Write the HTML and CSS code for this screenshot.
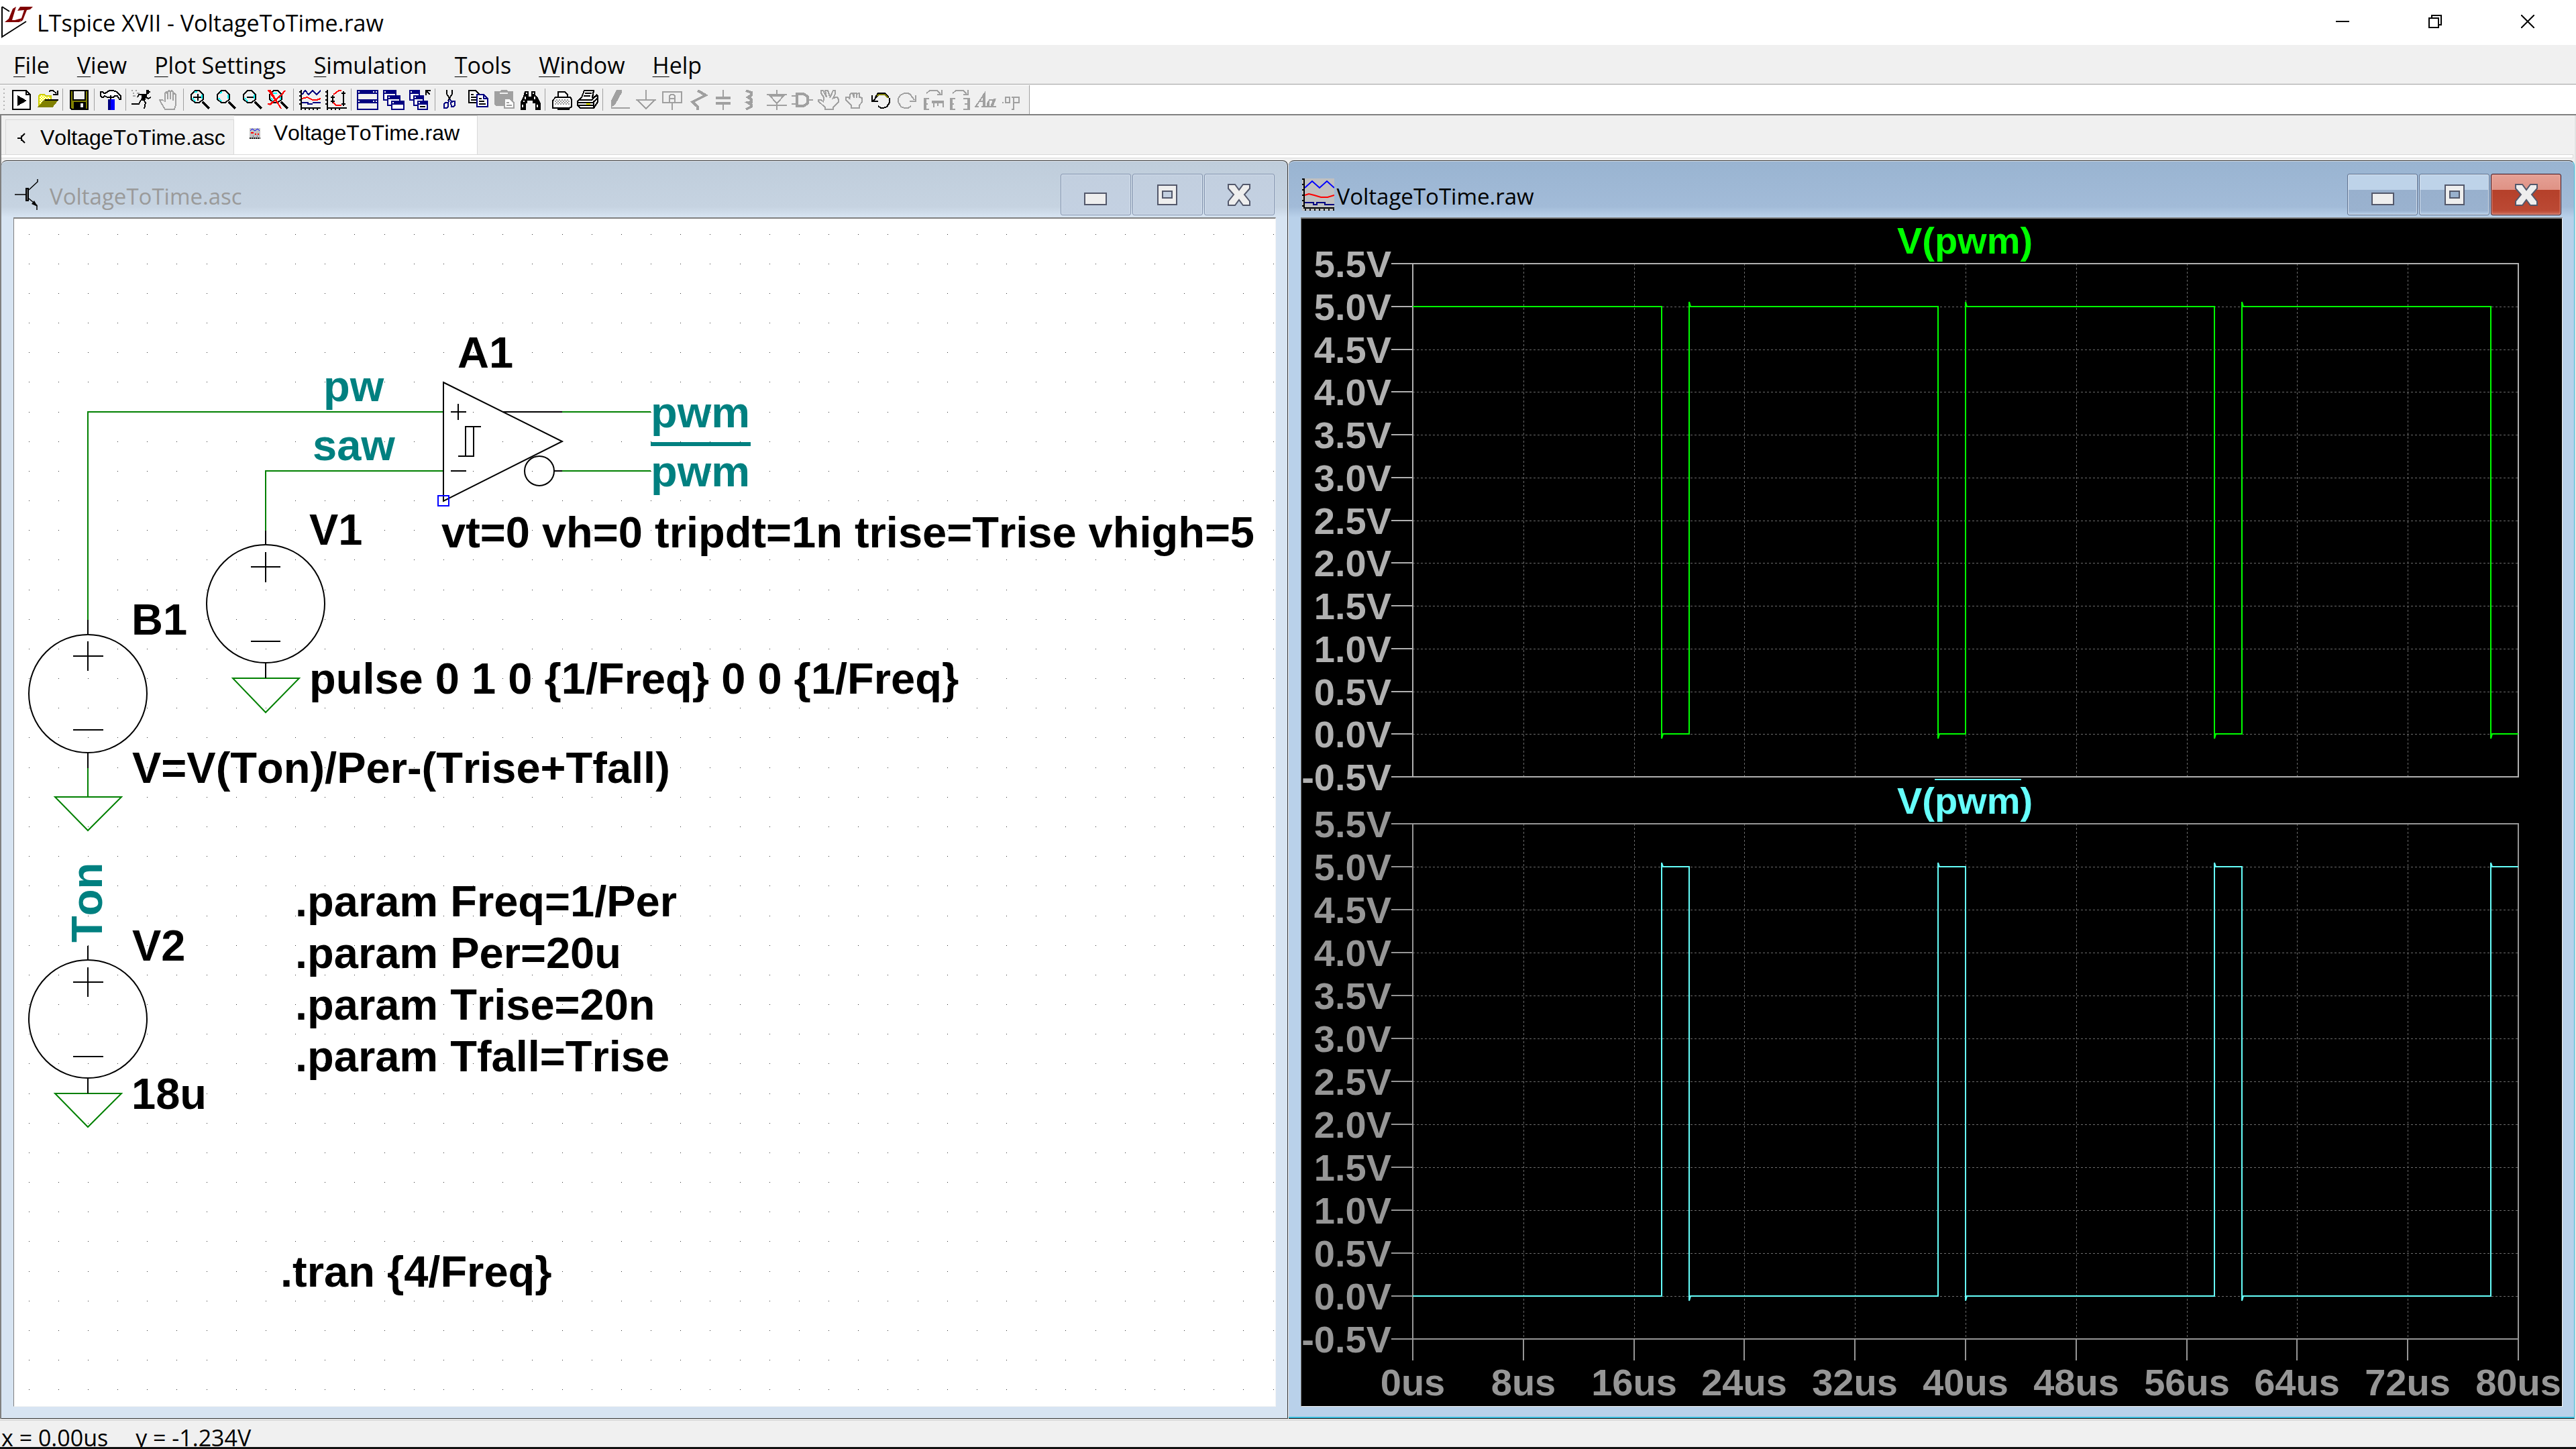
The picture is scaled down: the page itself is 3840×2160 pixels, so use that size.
FILE: index.html
```html
<!DOCTYPE html>
<html lang="en">
<head>
<meta charset="utf-8">
<title>LTspice XVII - VoltageToTime.raw</title>
<link rel="stylesheet" href="styles.css">
</head>
<body>
<header class="titlebar">
  <svg class="app-logo" width="50" height="58" viewBox="0 0 50 58" aria-hidden="true">
    <path d="M3 10 V55 L39 32 M3 10 L14 17" fill="none" stroke="#000" stroke-width="2"/>
    <path d="M24 10 L19 13 L13 28 L7 33 H29 L33 27 L22 30 H18 Z" fill="#800000"/>
    <path d="M26 16 L30 10 H49 L45 14 L40 15 L34 30 L30 33 L36 15 Z" fill="#800000"/>
  </svg>
  <h1 class="app-title">LTspice XVII - VoltageToTime.raw</h1>
  <div class="caption-buttons">
    <button class="caption-button" aria-label="Minimize"><svg width="20" height="20" viewBox="0 0 20 20"><path d="M0 10H20" stroke="#000" stroke-width="2"/></svg></button>
    <button class="caption-button" aria-label="Restore"><svg width="20" height="20" viewBox="0 0 20 20"><path d="M1 5H15V19H1ZM5 5V1H19V15H15" fill="none" stroke="#000" stroke-width="2"/></svg></button>
    <button class="caption-button" aria-label="Close"><svg width="20" height="20" viewBox="0 0 20 20"><path d="M0 0L20 20M20 0L0 20" stroke="#000" stroke-width="2"/></svg></button>
  </div>
</header>
<nav class="menubar">
  <button class="menu"><u>F</u>ile</button>
  <button class="menu"><u>V</u>iew</button>
  <button class="menu"><u>P</u>lot Settings</button>
  <button class="menu"><u>S</u>imulation</button>
  <button class="menu"><u>T</u>ools</button>
  <button class="menu"><u>W</u>indow</button>
  <button class="menu"><u>H</u>elp</button>
</nav>
<div class="toolbar-row">
<div class="toolbar">
  <svg class="grip" width="6" height="36" viewBox="0 0 6 36" aria-hidden="true"><path d="M2 1V36" stroke="#b4b4b4" stroke-width="2" stroke-dasharray="2 4"/></svg>
  <button class="tool" aria-label="New"><svg viewBox="0 0 16 15"><path class="k w" d="M1.5 .5H11.5L14.5 3.5V14.5H1.5Z"/><path class="k" d="M11.5 1V3.5H14"/><path d="M5 4V12L12 8Z"/></svg></button>
  <button class="tool" aria-label="Open"><svg viewBox="0 0 16 15"><defs><pattern id="weave" width="2" height="2" patternUnits="userSpaceOnUse"><path d="M0 0H2V2H0Z" fill="#fff"/><path d="M0 0H1V1H0ZM1 1H2V2H1Z" fill="#ff0"/></pattern></defs><path d="M1.5 12V4.5L2.5 3.5H5.5L6.5 4.5H10.5V8L3 12Z" fill="url(#weave)" stroke="#cc0"/><path d="M6 7.5H15.5L11.5 12.5H1.5Z" fill="#808000" stroke="#808000"/><path d="M6 7.5H16" stroke="#000"/><path class="k" d="M9 1.5L10 .5H12L14.5 2.5M15.5 .5V3.5H12"/></svg></button>
  <span class="sep"></span>
  <button class="tool" aria-label="Save"><svg viewBox="0 0 16 15"><path d="M1.5 .5H14.5V14.5H2.5L1.5 13.5Z" fill="#808000" stroke="#000"/><path class="k" d="M3.5 1V7.5H12.5V1" style="fill:#efefef"/><path d="M4 9H13V14H4Z"/><path d="M9 10H11V13H9Z" fill="#efefef"/></svg></button>
  <span class="sep"></span>
  <button class="tool" aria-label="Control Panel"><svg viewBox="0 0 16 15"><path class="k w" d="M.5 1.5H2L3 2.5H4L5.5 1.5L7 .5H10L12.5 1.5L15.5 4.5V7H14.5L13 4.5H11L10 5.5H5.5L3.5 4.5L2.5 5.5H1.5L.5 4.5Z"/><path class="k" d="M6 5.5H10M8 4V7"/><path d="M6 7H8V15H6Z" fill="#000080"/><path d="M8 7H11V15H8Z" fill="#00f"/></svg></button>
  <span class="sep"></span>
  <button class="tool" aria-label="Run"><svg viewBox="0 0 16 15"><path class="g" d="M0 .5H1M3 .5H4M1 2.5H2M4 2.5H6M1 4.5H3"/><path d="M11 0H13V3H11ZM8 3H12L10 8H7Z"/><path class="k" d="M8 3.5H5.5L4.5 5.5M11 5.5L12.5 6.5L14.5 5.5M9 7.5L10.5 9.5L9.5 14M7 7.5L5.5 10.5H0M13 1.5H14"/></svg></button>
  <button class="tool" aria-label="Halt"><svg viewBox="0 0 16 15"><path class="g" d="M4.5 8L3.5 7.5H1.5L2.5 9.5L5.5 14.5H12.5L13.5 11V3.5L12.5 2.5L11.5 3.5V7M11.5 8V1.5L10.5 .5L9.5 1.5V7M9.5 1.5L8.5 .5L7.5 1.5V7M7.5 3L6.5 1.5L5.5 2.5V9"/></svg></button>
  <span class="sep"></span>
  <button class="tool" aria-label="Zoom to rectangle"><svg viewBox="0 0 16 15"><path d="M10 9L15 14" stroke="#000" stroke-width="2"/><path class="k" d="M4.5 .5H7.5L10.5 3.5V7L7.5 9.5H4.5L1.5 7V3.5Z"/><path class="c" d="M2.5 6L4.5 8.5M9.5 3.5V6.5M4 1.5H6"/><path class="k" d="M3 5.5H9M6.5 3V8"/></svg></button>
  <button class="tool" aria-label="Pan"><svg viewBox="0 0 16 15"><path d="M10 9L15 14" stroke="#000" stroke-width="2"/><path class="k" d="M4.5 .5H7.5L10.5 3.5V7L7.5 9.5H4.5L1.5 7V3.5Z"/><path class="c" d="M2.5 6L4.5 8.5M9.5 3.5V6.5M3.5 2.5L5 1.5"/></svg></button>
  <button class="tool" aria-label="Zoom back"><svg viewBox="0 0 16 15"><path d="M10 9L15 14" stroke="#000" stroke-width="2"/><path class="k" d="M4.5 .5H7.5L10.5 3.5V7L7.5 9.5H4.5L1.5 7V3.5Z"/><path class="c" d="M2.5 6L4.5 8.5M9.5 3.5V6.5"/><path class="k" d="M4 5.5H9"/></svg></button>
  <button class="tool" aria-label="Zoom to fit"><svg viewBox="0 0 16 15"><path d="M10 9L15 14" stroke="#000" stroke-width="2"/><path class="k" d="M4.5 .5H7.5L10.5 3.5V7L7.5 9.5H4.5L1.5 7V3.5Z"/><path class="c" d="M2.5 6L4.5 8.5M9.5 3.5V7.5M4 2.5H7"/><path class="r" d="M0 .5H2L10 14M13 .5L9 5L1 11M0 10.5H2"/><path class="r" d="M1 1L9 12M12 2L2 11"/></svg></button>
  <span class="sep"></span>
  <button class="tool" aria-label="Autorange"><svg viewBox="0 0 16 15"><path class="k" d="M1.5 0V15M0 1.5H2M0 4.5H2M0 7.5H2M0 10.5H2M1 13.5H16M4.5 13V15M7.5 13V15M10.5 13V15M13.5 13V15"/><path class="n" d="M2 3.5L4.5 .5L7 3.5L10 .5L13 3.5L16 .5M2 9.5H7M6 10.5H10M10 9.5H16"/><path class="r" d="M2 6.5L6 5.5L10 7.5L13 7.5L16 6.5"/></svg></button>
  <button class="tool" aria-label="Fit vertically"><svg viewBox="0 0 16 15"><path class="k" d="M1.5 0V15M0 1.5H2M0 4.5H2M0 7.5H2M0 10.5H2M1 13.5H16M4.5 13V15M7.5 13V15M10.5 13V15M13.5 1V12M12 2.5H15M12 10.5H15M5.5 4V10M4 5.5H7M4 8.5H7"/><path class="r" d="M12 .5H10L6 3.5M6 9.5L8 11.5H12"/></svg></button>
  <span class="sep"></span>
  <button class="tool" aria-label="Tile"><svg viewBox="0 0 16 15"><path class="n" d="M.5 .5H15.5V14.5H.5Z"/><path class="nf" d="M0 0H16V3H0ZM0 7H16V10H0Z"/><path class="l" d="M1 1.5H2M12 1.5H13M14 1.5H15M1 8.5H2M12 8.5H13M14 8.5H15"/></svg></button>
  <button class="tool" aria-label="Cascade"><svg viewBox="0 0 16 15"><path class="n w" d="M.5 .5H9.5V7.5H.5Z"/><path class="n w" d="M3.5 4.5H12.5V11.5H3.5Z"/><path class="n w" d="M6.5 8.5H15.5V14.5H6.5Z"/><path class="nf" d="M0 0H10V3H0ZM3 4H13V7H3ZM6 8H16V11H6Z"/><path class="l" d="M1 1.5H2M4 5.5H5M7 9.5H8"/></svg></button>
  <button class="tool" aria-label="Close all"><svg viewBox="0 0 16 15"><path class="n w" d="M.5 .5H7.5V7.5H.5Z"/><path class="n w" d="M3.5 4.5H10.5V11.5H3.5Z"/><path class="n w" d="M6.5 8.5H13.5V14.5H6.5Z"/><path class="nf" d="M0 0H8V3H0ZM3 4H11V7H3ZM6 8H14V11H6Z"/><path class="l" d="M1 1.5H2M4 5.5H5M7 9.5H8"/><path class="k" d="M8 12.5H12M12.5 4V.5H16M12.5 .5L15.5 3.5"/></svg></button>
  <span class="sep"></span>
  <button class="tool" aria-label="Cut"><svg viewBox="0 0 16 15"><path class="k" d="M4.5 0V3L7.5 8M8.5 0V3L5.5 8"/><path class="n" d="M6.5 7L5.5 9.5M7 7L8.5 9.5M3.5 9.5H5.5V12.5L4.5 13.5H2.5V10.5ZM8.5 8.5H10.5V11.5L9.5 12.5H8L7.5 9.5Z"/></svg></button>
  <button class="tool" aria-label="Copy"><svg viewBox="0 0 16 15"><path class="k w" d="M1.5 .5H6.5L9.5 3.5V9.5H1.5Z"/><path class="k" d="M3 3.5H5M3 5.5H7M3 7.5H7"/><path class="n w" d="M7.5 3.5H12.5L15.5 6.5V12.5H7.5Z"/><path class="n" d="M12.5 4V6.5H15"/><path class="k" d="M9 6.5H11M9 8.5H13M9 10.5H14"/></svg></button>
  <button class="tool" aria-label="Paste"><svg viewBox="0 0 16 15"><path d="M1 1H5L6 0H10L11 1H15V12H2L1 11Z" fill="#a0a0a0"/><path d="M5 2.5H11" class="l"/><path class="g w" d="M8.5 6.5H12.5L15.5 9.5V13.5H8.5Z"/><path class="g" d="M10 9.5H12M10 11.5H14"/></svg></button>
  <button class="tool" aria-label="Find"><svg viewBox="0 0 16 15"><path d="M4 1H7V5H9V1H12V4L14 6L16 10V15H12V10H10V8H6V10H5V15H1V9L3 5Z"/><path class="l" d="M5.5 2V3M10.5 2V3M4.5 5V7M3.5 8V9M2.5 11V13M11.5 5V7M13.5 11V13"/></svg></button>
  <span class="sep"></span>
  <button class="tool" aria-label="Print preview"><svg viewBox="0 0 16 15"><path class="k w" d="M5.5 5V1.5H10.5L12.5 3.5V5"/><path class="k w" d="M3.5 5.5H14.5L15.5 7V12.5L14 13.5H1.5V8Z"/><path d="M3 8.5H14M3 10.5H14" stroke="#999" stroke-dasharray="1 1"/><path d="M4 9.5H14M4 7.5H14" stroke="#999" stroke-dasharray="1 1"/><path d="M5 13H14V15H5Z"/></svg></button>
  <button class="tool" aria-label="Print"><svg viewBox="0 0 16 15"><path class="k w" d="M1.5 7.5L3.5 5.5L5.5 .5H12.5L11.5 5.5L15.5 4.5V9L12.5 13.5H2.5L.5 11.5V8.5Z"/><path class="k" d="M6 2.5H11M5 4.5H10M1 7.5H11L15 3.5M1 9.5H12L15 6.5M1 11.5H12M12.5 8V13"/><path d="M7 10.5H10" stroke="#ff0"/></svg></button>
  <span class="sep"></span>
  <button class="tool" aria-label="Wire"><svg viewBox="0 0 16 15"><path d="M6 0H10V2L5 11L2 13V8Z" fill="#a0a0a0"/><path class="g" d="M2 13.5H16"/></svg></button>
  <button class="tool" aria-label="Ground"><svg viewBox="0 0 16 15"><path class="g" d="M8.5 0V7M1 7.5H16M2 7.5L8.5 14L15 7.5"/></svg></button>
  <button class="tool" aria-label="Label net"><svg viewBox="0 0 16 15"><path class="g" d="M1.5 1.5H15.5V9.5H1.5ZM8.5 10V15M6.5 9V4.5L7.5 3.5H9.5L10.5 4.5V9M7 6.5H10"/></svg></button>
  <button class="tool" aria-label="Resistor"><svg viewBox="0 0 16 15"><path class="g bold" d="M8 .5L14 4L4 9L8 12.5V15"/></svg></button>
  <button class="tool" aria-label="Capacitor"><svg viewBox="0 0 16 15"><path class="g" d="M7.5 0V5M7.5 11V15"/><path d="M2 5H13V7H2ZM2 9H13V11H2Z" fill="#a0a0a0"/></svg></button>
  <button class="tool" aria-label="Inductor"><svg viewBox="0 0 16 15"><path class="g bold" d="M5 .5L9 2V4L6.5 5.5L9 7V9L6.5 9.500L9 11V12.5L5 14.5"/></svg></button>
  <button class="tool" aria-label="Diode"><svg viewBox="0 0 16 15"><path class="g" d="M8.5 0V3M1 3.5H16M2.5 3.5L8.5 10L14.5 3.5M3 4.5H14M1 11.5H16M8.5 9V15"/></svg></button>
  <button class="tool" aria-label="Component"><svg viewBox="0 0 16 15"><path class="g bold" d="M4 3H9L12 5V10L9 12H4Z"/><path class="g" d="M0 4.5H4M0 10.5H4M12 7.5H16"/></svg></button>
  <button class="tool" aria-label="Move"><svg viewBox="0 0 16 15"><path class="g" d="M5.5 14.5V13L.5 8.5V7.5H2.5L4.5 9M4.5 8V5.5L2.5 2.5V.5H4L6.5 5.5M6.5 5L5.5 .5H7.5L9 5M9 6L11.5 .5H13V3L11 7M11 6L14.5 5.5L15.5 7V9L11.5 13V14.5H5"/></svg></button>
  <button class="tool" aria-label="Drag"><svg viewBox="0 0 16 15"><path class="g" d="M5.5 13.5V11.5L1.5 7.5V5.5H3.5L4.5 7M4.5 6V3.5L5.5 2.5H6.5L7.5 6M7.5 5V2.5H9.5V6M9.5 3L11.5 2.5V6M12 5.5L13.5 6V9L11.5 11.5V13.5H5"/></svg></button>
  <button class="tool" aria-label="Undo"><svg viewBox="0 0 16 15"><path class="k" d="M1.5 4V8.5H6M2 8.5L5.5 4.5M14.5 6V9.5L12.5 12.5L10 13.5H8L6 12"/><path class="k" d="M4 5.5L6 2.5H11L13.5 5V6"/><path d="M5 4.5L6.500 3.5H11L13.5 6" fill="none" stroke="#808000"/></svg></button>
  <button class="tool" aria-label="Redo"><svg viewBox="0 0 16 15"><path class="g" d="M14.5 4V8.5H10M13.5 7.5L10.5 3.5L9 2.5H6L3 4L1.5 6.5V9L3.5 12.5L6 13.5H9L11 12"/></svg></button>
  <button class="tool" aria-label="Rotate"><svg viewBox="0 0 16 15"><path class="g" d="M3 2.5L5.5 .5H11L13.5 3M14.5 0V3.5H11M5 6.5H1.5V14.5H5M2.5 6V15M1 10.5H4M7 8.5H16M7 9.5H16M8.5 8V13M11.5 8V12M15.5 8V13"/></svg></button>
  <button class="tool" aria-label="Mirror"><svg viewBox="0 0 16 15"><path class="g" d="M3 2.5L5.5 .5H11L13.5 3M14.5 0V3.5H11M5 6.5H1.5V14.5H5M2.5 6V15M1 10.5H4M11 6.5H15.5V14.5H11M14.5 6V15M12 10.5H15"/></svg></button>
  <button class="tool" aria-label="Text"><svg viewBox="0 0 16 15"><path class="g" d="M0 12.5H3M1 12L7.5 2.5V12.5M6.5 3V12M5 12.5H9M4 8.5H7M15.5 6.5L13 12.5H16M14.5 6.5L12 12.5M14 7.5H11L9.5 10V12.5H12L14 9M10.5 8V12"/></svg></button>
  <button class="tool" aria-label="SPICE directive"><svg viewBox="0 0 16 15"><path class="g" d="M1 9.5H2M3.5 5.5H6.5V9.5H3.5ZM9.5 15V5.5H13.5V9.5H9M8 5.5H10M8 14.5H10"/></svg></button>
</div>
</div>
<main class="frame">
  <div class="tabs" role="tablist">
    <button class="tab" role="tab" aria-selected="false">
      <svg width="12" height="16" viewBox="0 0 12 16" aria-hidden="true"><path d="M0 8H6M6 4V12M6 6L11 1M6 10L11 15" fill="none" stroke="#000" stroke-width="2"/></svg>
      <span>VoltageToTime.asc</span></button>
    <button class="tab tab-active" role="tab" aria-selected="true">
      <svg width="16" height="16" viewBox="0 0 16 16" aria-hidden="true"><path d="M0 0H16V16H0Z" fill="#c0c0c0"/><path d="M1 4L4 1L8 4L12 1L15 4" fill="none" stroke="#00f" stroke-width="1"/><path d="M2 7H6M8 9H10M12 9H14" stroke="#f00" stroke-width="2"/><path d="M0 15H16" stroke="#000" stroke-width="2" stroke-dasharray="2 1"/><path d="M5 12H6M11 12H12" stroke="#000080"/></svg>
      <span>VoltageToTime.raw</span></button>
  </div>
  <div class="tab-strip"></div>
  <div class="workspace">
    <section class="child inactive">
      <header class="child-title">
        <svg class="child-icon" width="48" height="48" viewBox="0 0 48 48" aria-hidden="true"><path d="M0 24H17M21 17L34 5V1M21 30L33 40V47" fill="none" stroke="#000" stroke-width="1.5"/><path d="M17 15H20V33H17Z" fill="#888" stroke="#000" stroke-width="2"/><path d="M25 38L29 33L34 42Z"/></svg>
        <h2>VoltageToTime.asc</h2>
        <div class="child-buttons">
          <button class="child-button" aria-label="Minimize"><svg width="34" height="34" viewBox="0 0 34 34"><path class="glyph" d="M1 15H33V32H1Z"/></svg></button>
          <button class="child-button" aria-label="Maximize"><svg width="34" height="34" viewBox="0 0 34 34"><path class="glyph" fill-rule="evenodd" d="M3 3H31V32H3ZM10 12V22H24V12Z"/></svg></button>
          <button class="child-button" aria-label="Close"><svg width="34" height="34" viewBox="0 0 34 34"><path class="glyph" d="M1 2H11L17 10L23 2H33V8L25 17L33 27V33H23L17 25L11 33H1V27L9 17L1 8Z"/></svg></button>
        </div>
      </header>
      <div class="pane schematic">
        <svg class="drawing" role="img" aria-label="Schematic">
          <g transform="translate(-21 -326)">
            <path id="grid-dots" d="" stroke="#333" stroke-width="1" shape-rendering="crispEdges"/>
            <g class="wire">
              <path d="M131 924V614H661M396 791V702H661M838 614H970M838 702H970M131 1145V1188"/>
              <path d="M82 1188H181L131 1238ZM347 1011H446L396 1062ZM82 1630H181L131 1680Z"/>
            </g>
            <g class="symbol">
              <path d="M661 570L838 658L661 747ZM672 614H695M683 602V626M672 702H695M694 680V636H717M683 680H706V636M750 614H838M826 702H838"/>
              <circle cx="804" cy="702" r="22"/>
              <circle cx="131" cy="1034" r="88"/>
              <path d="M131 924V946M131 1122V1145M109 978H154M131 956V1000M109 1088H154"/>
              <circle cx="396" cy="900" r="88"/>
              <path d="M396 791V812M396 988V1011M374 845H418M396 823V868M374 956H418"/>
              <circle cx="131" cy="1519" r="88"/>
              <path d="M131 1410V1431M131 1607V1630M109 1464H154M131 1442V1486M109 1575H154"/>
            </g>
            <path d="M653 739H669V754H653Z" fill="none" stroke="#00f" stroke-width="2"/>
            <path d="M970 662H1119" stroke="#008080" stroke-width="6"/>
            <g class="net">
              <text x="482" y="598">pw</text>
              <text x="466" y="686">saw</text>
              <text x="970" y="637">pwm</text>
              <text x="970" y="725">pwm</text>
              <text transform="translate(152 1405) rotate(-90)">Ton</text>
            </g>
            <g class="note">
              <text x="682" y="548">A1</text>
              <text x="461" y="812">V1</text>
              <text x="196" y="946">B1</text>
              <text x="658" y="816">vt=0 vh=0 tripdt=1n trise=Trise vhigh=5</text>
              <text x="461" y="1034">pulse 0 1 0 {1/Freq} 0 0 {1/Freq}</text>
              <text x="197" y="1167">V=V(Ton)/Per-(Trise+Tfall)</text>
              <text x="197" y="1432">V2</text>
              <text x="196" y="1653">18u</text>
              <text x="440" y="1366">.param Freq=1/Per</text>
              <text x="440" y="1443">.param Per=20u</text>
              <text x="440" y="1520">.param Trise=20n</text>
              <text x="440" y="1597">.param Tfall=Trise</text>
              <text x="418" y="1918">.tran {4/Freq}</text>
            </g>
          </g>
        </svg>
      </div>
    </section>
    <section class="child active">
      <header class="child-title">
        <svg class="child-icon" width="48" height="48" viewBox="0 0 48 48" aria-hidden="true"><path d="M0 0H48V48H0Z" fill="#c0c0c0"/><path d="M4 14L15 4L26 14L37 4L48 14" fill="none" stroke="#00f" stroke-width="2"/><path d="M4 25L10 23L18 25L28 28H38L48 25" fill="none" stroke="#f00" stroke-width="2"/><path d="M4 36H17V39H22V36H34V39H48" fill="none" stroke="#000080" stroke-width="2"/><path d="M3 0V44H48" fill="none" stroke="#000" stroke-width="2"/><path d="M1 0V44" stroke="#000" stroke-width="2" stroke-dasharray="2 6"/><path d="M4 47H48" stroke="#000" stroke-width="3" stroke-dasharray="2 5"/></svg>
        <h2>VoltageToTime.raw</h2>
        <div class="child-buttons">
          <button class="child-button" aria-label="Minimize"><svg width="34" height="34" viewBox="0 0 34 34"><path class="glyph" d="M1 15H33V32H1Z"/></svg></button>
          <button class="child-button" aria-label="Maximize"><svg width="34" height="34" viewBox="0 0 34 34"><path class="glyph" fill-rule="evenodd" d="M3 3H31V32H3ZM10 12V22H24V12Z"/></svg></button>
          <button class="child-button close" aria-label="Close"><svg width="34" height="34" viewBox="0 0 34 34"><path class="glyph" d="M1 2H11L17 10L23 2H33V8L25 17L33 27V33H23L17 25L11 33H1V27L9 17L1 8Z"/></svg></button>
        </div>
      </header>
      <div class="pane waveform">
        <svg class="drawing" role="img" aria-label="Waveforms">
          <g transform="translate(-1940 -326)">
            <g class="plot-a">
              <path class="gridline" id="grid-a" d=""/>
              <path class="axis" id="axis-a" d=""/>
              <g class="ylabels">
                <text x="2074" y="413">5.5V</text><text x="2074" y="477">5.0V</text><text x="2074" y="541">4.5V</text><text x="2074" y="604">4.0V</text><text x="2074" y="668">3.5V</text><text x="2074" y="732">3.0V</text><text x="2074" y="796">2.5V</text><text x="2074" y="859">2.0V</text><text x="2074" y="923">1.5V</text><text x="2074" y="987">1.0V</text><text x="2074" y="1051">0.5V</text><text x="2074" y="1114">0.0V</text><text x="2074" y="1178">-0.5V</text>
              </g>
              <path class="trace" d="M2106 457H2477V1101L2479 1094H2518V450L2520 457H2889V1101L2891 1094H2930V450L2932 457H3301V1101L3303 1094H3342V450L3344 457H3713V1101L3715 1094H3754"/>
              <text class="plot-title" x="2929" y="378">V(pwm)</text>
            </g>
            <g class="plot-b">
              <path class="gridline" id="grid-b" d=""/>
              <path class="axis" id="axis-b" d=""/>
              <g class="ylabels">
                <text x="2074" y="1248">5.5V</text><text x="2074" y="1312">5.0V</text><text x="2074" y="1376">4.5V</text><text x="2074" y="1440">4.0V</text><text x="2074" y="1504">3.5V</text><text x="2074" y="1568">3.0V</text><text x="2074" y="1632">2.5V</text><text x="2074" y="1696">2.0V</text><text x="2074" y="1760">1.5V</text><text x="2074" y="1824">1.0V</text><text x="2074" y="1888">0.5V</text><text x="2074" y="1952">0.0V</text><text x="2074" y="2016">-0.5V</text>
              </g>
              <g class="xlabels">
                <text x="2106" y="2080">0us</text><text x="2271" y="2080">8us</text><text x="2436" y="2080">16us</text><text x="2600" y="2080">24us</text><text x="2765" y="2080">32us</text><text x="2930" y="2080">40us</text><text x="3095" y="2080">48us</text><text x="3260" y="2080">56us</text><text x="3424" y="2080">64us</text><text x="3589" y="2080">72us</text><text x="3754" y="2080">80us</text>
              </g>
              <path class="trace" d="M2106 1932H2477V1286L2479 1292H2518V1939L2520 1932H2889V1286L2891 1292H2930V1939L2932 1932H3301V1286L3303 1292H3342V1939L3344 1932H3713V1286L3715 1292H3754"/>
              <path class="trace" d="M2884 1162H3013"/>
              <text class="plot-title" x="2929" y="1213">V(pwm)</text>
            </g>
          </g>
        </svg>
      </div>
    </section>
  </div>
</main>
<footer class="statusbar"><span>x = 0.00us</span><span>y = -1.234V</span></footer>
<div class="desktop-edge"></div>
<script src="plot.js"></script>
</body>
</html>
```
FILE: styles.css
```css
* { box-sizing: border-box; }
body {
  margin: 0;
  height: 100vh;
  display: flex;
  flex-direction: column;
  overflow: hidden;
  background: #f0f0f0;
  color: #000;
  font-family: "Open Sans", "Noto Sans", sans-serif;
  font-size: 34px;
}
button {
  margin: 0;
  padding: 0;
  border: 0;
  background: none;
  color: inherit;
  font: inherit;
}
svg { display: block; flex: none; }
h1, h2 { margin: 0; font-weight: 400; white-space: nowrap; }
h1 { font-size: 34px; }
h2 { font-size: 33px; }

.titlebar {
  display: flex;
  align-items: center;
  height: 67px;
  flex: none;
  background: #fff;
}
.app-logo { align-self: flex-start; }
.app-title { margin-left: 5px; line-height: 64px; flex: 1; }
.caption-buttons { display: flex; align-self: stretch; margin-right: 3px; }
.caption-button {
  display: flex;
  width: 138px;
  height: 64px;
  align-items: center;
  justify-content: center;
}

.menubar {
  display: flex;
  gap: 41px;
  height: 59px;
  flex: none;
  padding-left: 20px;
  border-bottom: 1px solid #a0a0a0;
}
.menu { line-height: 60px; height: 58px; white-space: nowrap; }
.menu u { text-decoration-thickness: 1px; text-underline-offset: 4px; }

.toolbar-row {
  height: 46px;
  flex: none;
  display: flex;
  background: #fff;
  border-top: 1px solid #fff;
  border-bottom: 2px solid #808080;
}
.toolbar {
  display: flex;
  align-items: center;
  width: 1535px;
  padding-left: 4px;
  background: #f0f0f0;
  border-right: 1px solid #a0a0a0;
}
.grip { margin-right: 2px; }
.tool {
  width: 39px;
  height: 40px;
  flex: none;
  padding-left: 4px;
}
.tool svg { width: 32px; height: 30px; shape-rendering: crispEdges; }
.sep {
  width: 8px;
  height: 33px;
  flex: none;
  border-left: 3px solid #f0f0f0;
  background: linear-gradient(90deg, #a0a0a0 1px, #f0f0f0 1px);
}
.k, .n, .g, .r, .c, .l { fill: none; stroke-width: 1; }
.k { stroke: #000; }
.n { stroke: #000080; }
.g { stroke: #a0a0a0; }
.r { stroke: #f00; }
.c { stroke: #0ff; }
.l { stroke: #f0f0f0; }
.w { fill: #fff; }
.nf { fill: #000080; }
.bold { stroke-width: 2; }

.frame {
  flex: 1;
  min-height: 0;
  display: flex;
  flex-direction: column;
  border-left: 2px solid #808080;
  border-right: 2px solid #e3e3e3;
}
.tabs {
  display: flex;
  align-items: flex-end;
  height: 58px;
  flex: none;
  padding-left: 6px;
  font-family: "Liberation Sans", Arial, sans-serif;
  font-size: 32px;
  font-kerning: none;
}
.tab {
  display: flex;
  align-items: center;
  gap: 22px;
  height: 52px;
  padding: 2px 12px 0 17px;
  border: 1px solid #d9d9d9;
  border-bottom: 0;
  white-space: nowrap;
}
.tab-active {
  height: 58px;
  gap: 20px;
  padding: 0 26px 6px 23px;
  background: #fff;
  border-left: 0;
}
.tab-strip {
  height: 6px;
  flex: none;
  margin: 0 2px 3px 0;
  background: #fff;
  border: 1px solid #d9d9d9;
  border-left: 0;
}

.workspace { flex: 1; min-height: 0; display: flex; gap: 1px; }
.child {
  flex: 1 1 0;
  min-width: 0;
  display: flex;
  flex-direction: column;
  padding: 0 17px 17px 18px;
  border: 1px solid #333;
  border-left-width: 0;
  border-radius: 8px 8px 0 0;
  box-shadow: inset 0 1px 0 #e8f0f8;
}
.inactive { background: linear-gradient(#bfcddb, #c6d3e1 68px, #d7e4f2 84px); }
.active {
  background: linear-gradient(#99b4d1, #a2bbd8 68px, #b9d1ea 84px);
  border-right-color: #38c0e0;
  border-bottom-color: #111;
  box-shadow: inset 0 1px 0 #d5e3f2, inset 0 -2px 0 #38bcdc;
}
.child-title { height: 84px; flex: none; display: flex; align-items: flex-start; }
.child-icon { margin: 26px 0 0 2px; }
.child-title h2 { flex: 1; margin: 28px 0 0 4px; line-height: 50px; }
.inactive h2 { color: #9a9a9a; }
.child-buttons { display: flex; gap: 2px; margin: 19px 2px 0 0; }
.child-button {
  display: flex;
  align-items: center;
  justify-content: center;
  width: 105px;
  height: 62px;
  border: 1px solid #8393ae;
  border-radius: 3px;
  box-shadow: inset 0 0 0 1px #d5e0ed;
  background: linear-gradient(#c2cfdf, #c4d1e2);
}
.active .child-button {
  border-color: #5f7291;
  background: linear-gradient(#bed3e9 23px, #98b0cd 23px, #9ab2cf 54px, #b8d0ea);
}
.active .close {
  border-color: #3d0f18;
  box-shadow: inset 0 0 0 1px #e9a79d;
  background: linear-gradient(#e5a196, #df9285 23px, #b5402a 23px, #bb4934 54px, #d0705e);
}
.glyph { fill: #eee; stroke: #53586b; stroke-width: 2; }

.pane {
  flex: 1;
  min-height: 0;
  display: flex;
  border-top: 2px solid #808080;
  border-left: 1px solid #808080;
  border-right: 1px solid #f4f4f4;
  border-bottom: 1px solid #f4f4f4;
  overflow: hidden;
}
.schematic { background: #fff; }
.waveform { background: #000; }
.drawing {
  flex: 1;
  min-width: 0;
  font-family: "Liberation Sans", Arial, sans-serif;
  font-weight: 700;
  font-kerning: none;
}
.wire, .symbol { fill: none; stroke-width: 2; }
.wire { stroke: #008000; }
.symbol { stroke: #000; }
.note, .net { font-size: 65px; }
.net { fill: #008080; }

.ylabels, .xlabels, .plot-title { font-size: 56px; }
.ylabels { text-anchor: end; }
.xlabels, .plot-title { text-anchor: middle; }
.gridline { fill: none; stroke: #6c6c6c; stroke-width: 1; stroke-dasharray: 3 3; shape-rendering: crispEdges; }
.axis, .trace { fill: none; stroke-width: 2; }
.plot-a { fill: #b0b0b0; }
.plot-a .axis { stroke: #b0b0b0; }
.plot-b { fill: #969696; }
.plot-b .axis { stroke: #969696; }
.plot-a .trace { stroke: #0f0; }
.plot-a .plot-title { fill: #0f0; }
.plot-b .trace { stroke: #66fffb; }
.plot-b .plot-title { fill: #66fffb; }

.statusbar {
  display: flex;
  gap: 41px;
  height: 41px;
  flex: none;
  margin-top: 1px;
  padding-left: 2px;
  overflow: hidden;
  border-top: 2px solid #dcdcdc;
  font-size: 34px;
  line-height: 50px;
  white-space: nowrap;
}
.desktop-edge { height: 3px; flex: none; background: #111; }
```
FILE: plot.js
```js
// Schematic snap grid
const PITCH = 44.17;
let dots = "";
for (let row = 0; row < 40; row++) {
  for (let col = 0; col < 43; col++) {
    const x = Math.round(42.5 + col * PITCH);
    const y = Math.round(348.6 + row * PITCH);
    dots += `M${x} ${y}.5h1`;
  }
}
document.getElementById("grid-dots").setAttribute("d", dots);

// Plot frames, ticks and grid lines
const LEFT = 2106, RIGHT = 3754;
function frame(id, top, bottom, xTicks) {
  let grid = "";
  let axis = `M${LEFT} ${top}H${RIGHT}V${bottom}H${LEFT}Z`;
  for (let i = 0; i <= 12; i++) {
    const y = Math.round(top + (bottom - top) * i / 12);
    axis += `M${LEFT - 32} ${y}H${LEFT}`;
    if (i > 0 && i < 12) grid += `M${LEFT} ${y}.5H${RIGHT}`;
  }
  for (let i = 0; i <= 10; i++) {
    const x = Math.round(LEFT + (RIGHT - LEFT) * i / 10);
    if (xTicks) axis += `M${x} ${bottom}V${bottom + 32}`;
    if (i > 0 && i < 10) grid += `M${x}.5 ${top}V${bottom}`;
  }
  document.getElementById("grid-" + id).setAttribute("d", grid);
  document.getElementById("axis-" + id).setAttribute("d", axis);
}
frame("a", 393, 1158, false);
frame("b", 1228, 1996, true);
```
